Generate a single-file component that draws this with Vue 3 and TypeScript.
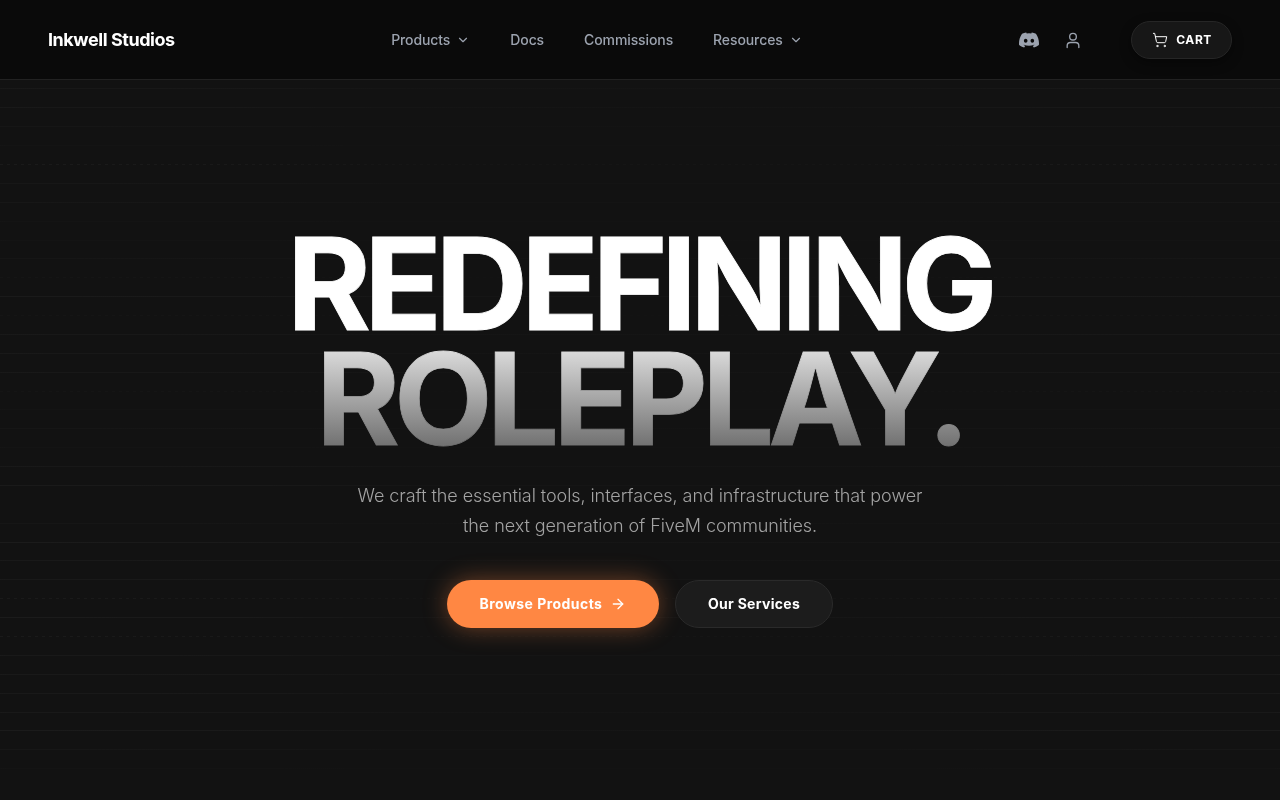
<script setup lang="ts">
const links = [
  { label: 'Products', caret: true },
  { label: 'Docs', caret: false },
  { label: 'Commissions', caret: false },
  { label: 'Resources', caret: true },
]

// Faint scan lines behind the hero: [row index, opacity, dotted]
const rows: [number, number, boolean][] = [
  [-4, 0.03, false], [-3, 0.03, false], [-2, 0.018, false], [-1, 0.01, false],
  [0, 0.04, true], [1, 0.025, false], [2, 0.025, false], [3, 0.012, false],
  [4, 0.01, false], [5, 0.018, false], [6, 0.016, true], [7, 0.04, false],
  [8, 0.016, true], [9, 0.03, false], [10, 0.03, false], [11, 0.03, false],
  [12, 0.016, true], [13, 0.012, false], [14, 0.018, false], [15, 0.01, false],
  [16, 0.03, false], [17, 0.04, false], [19, 0.018, false], [20, 0.045, false],
  [21, 0.035, false], [22, 0.035, false], [23, 0.04, true], [24, 0.045, false],
  [25, 0.04, true], [26, 0.035, false], [27, 0.035, false], [28, 0.035, false],
  [29, 0.035, false], [30, 0.045, false], [31, 0.025, false], [32, 0.012, false],
]
const scanLines = rows.map(([n, alpha, dotted]) => ({
  y: Math.round(164 + n * 18.88) + 0.5,
  alpha,
  dash: dotted ? '3 4' : undefined,
}))
</script>

<template>
  <div class="page">
    <svg class="scan" width="1280" height="800" viewBox="0 0 1280 800" aria-hidden="true">
      <defs>
        <linearGradient id="scanFade" x1="0" y1="0" x2="1280" y2="0" gradientUnits="userSpaceOnUse">
          <stop offset="0" stop-color="#fff" stop-opacity="0.9" />
          <stop offset="0.2" stop-color="#fff" stop-opacity="0.75" />
          <stop offset="0.33" stop-color="#fff" stop-opacity="0.35" />
          <stop offset="0.67" stop-color="#fff" stop-opacity="0.35" />
          <stop offset="0.8" stop-color="#fff" stop-opacity="0.75" />
          <stop offset="1" stop-color="#fff" stop-opacity="0.9" />
        </linearGradient>
      </defs>
      <line
        v-for="l in scanLines"
        :key="l.y"
        x1="0"
        x2="1280"
        :y1="l.y"
        :y2="l.y"
        stroke="url(#scanFade)"
        stroke-width="1"
        :stroke-opacity="l.alpha"
        :stroke-dasharray="l.dash"
      />
    </svg>

    <header class="nav">
      <a class="brand">Inkwell Studios</a>
      <nav class="links">
        <a v-for="l in links" :key="l.label" class="link">
          {{ l.label }}
          <svg v-if="l.caret" class="caret" viewBox="0 0 24 24" fill="none" stroke="currentColor" stroke-width="2" stroke-linecap="round" stroke-linejoin="round"><path d="m6 9 6 6 6-6" /></svg>
        </a>
      </nav>
      <div class="actions">
        <svg class="discord" viewBox="0 0 24 24" fill="currentColor"><path d="M20.317 4.37a19.791 19.791 0 0 0-4.885-1.515.074.074 0 0 0-.079.037c-.21.375-.444.864-.608 1.25a18.27 18.27 0 0 0-5.487 0 12.64 12.64 0 0 0-.617-1.25.077.077 0 0 0-.079-.037A19.736 19.736 0 0 0 3.677 4.37a.07.07 0 0 0-.032.027C.533 9.046-.32 13.58.099 18.057a.082.082 0 0 0 .031.057 19.9 19.9 0 0 0 5.993 3.03.078.078 0 0 0 .084-.028 14.09 14.09 0 0 0 1.226-1.994.076.076 0 0 0-.041-.106 13.107 13.107 0 0 1-1.872-.892.077.077 0 0 1-.008-.128 10.2 10.2 0 0 0 .372-.292.074.074 0 0 1 .077-.01c3.928 1.793 8.18 1.793 12.062 0a.074.074 0 0 1 .078.01c.12.098.246.198.373.292a.077.077 0 0 1-.006.127 12.299 12.299 0 0 1-1.873.892.077.077 0 0 0-.041.107c.36.698.772 1.362 1.225 1.993a.076.076 0 0 0 .084.028 19.839 19.839 0 0 0 6.002-3.03.077.077 0 0 0 .032-.054c.5-5.177-.838-9.674-3.549-13.66a.061.061 0 0 0-.031-.03zM8.02 15.33c-1.183 0-2.157-1.085-2.157-2.419 0-1.333.956-2.419 2.157-2.419 1.21 0 2.176 1.096 2.157 2.42 0 1.333-.956 2.418-2.157 2.418zm7.975 0c-1.183 0-2.157-1.085-2.157-2.419 0-1.333.955-2.419 2.157-2.419 1.21 0 2.176 1.096 2.157 2.42 0 1.333-.946 2.418-2.157 2.418z" /></svg>
        <svg class="user" viewBox="0 0 24 24" fill="none" stroke="currentColor" stroke-width="1.6" stroke-linecap="round" stroke-linejoin="round"><circle cx="12" cy="8" r="4" /><path d="M19 21v-2a4 4 0 0 0-4-4H9a4 4 0 0 0-4 4v2" /></svg>
        <button class="cart">
          <svg class="cart-icon" viewBox="0 0 24 24" fill="none" stroke="currentColor" stroke-width="1.5" stroke-linecap="round" stroke-linejoin="round"><circle cx="8" cy="21" r="1" /><circle cx="19" cy="21" r="1" /><path d="M2.05 2.05h2l2.66 12.42a2 2 0 0 0 2 1.58h9.78a2 2 0 0 0 1.95-1.57l1.65-7.43H5.12" /></svg>
          CART
        </button>
      </div>
    </header>

    <main class="hero">
      <h1 class="title">
        <span class="line-one">REDEFINING</span>
        <span class="line-two">ROLEPLAY.</span>
      </h1>
      <p class="lead">We craft the essential tools, interfaces, and infrastructure that power the next generation of FiveM communities.</p>
      <div class="cta">
        <a class="btn primary">
          Browse Products
          <svg class="arrow" viewBox="0 0 24 24" fill="none" stroke="currentColor" stroke-width="2" stroke-linecap="round" stroke-linejoin="round"><path d="M5 12h14" /><path d="m12 5 7 7-7 7" /></svg>
        </a>
        <a class="btn secondary">Our Services</a>
      </div>
    </main>
  </div>
</template>

<style>
html, body { margin: 0; background: #121212; }
</style>

<style scoped>
.page {
  position: relative;
  width: 1280px;
  height: 800px;
  overflow: hidden;
  display: flex;
  flex-direction: column;
  font-family: Inter, "Liberation Sans", sans-serif;
  background-color: #121212;
}
.scan {
  position: absolute;
  inset: 0;
  pointer-events: none;
}
.nav {
  position: relative;
  height: 79px;
  flex: none;
  display: flex;
  justify-content: space-between;
  align-items: center;
  padding: 0 48px;
  background: rgba(10, 10, 10, 0.98);
  border-bottom: 1px solid #222222;
  will-change: transform;
}
.brand {
  font-size: 18px;
  font-weight: 700;
  letter-spacing: -0.45px;
  color: #ffffff;
}
.links {
  display: flex;
  align-items: center;
  gap: 40px;
}
.link {
  display: flex;
  align-items: center;
  gap: 6px;
  font-size: 14px;
  font-weight: 500;
  letter-spacing: -0.1px;
  color: #9ca3af;
}
.caret { width: 14px; height: 14px; }
.actions {
  display: flex;
  align-items: center;
  color: #9ca3af;
}
.discord { width: 20px; height: 20px; margin-right: 24px; }
.user { width: 20px; height: 20px; margin-right: 48px; }
.cart {
  display: flex;
  align-items: center;
  gap: 8px;
  height: 38px;
  padding: 0 19px 0 20px;
  border-radius: 19px;
  border: 1px solid #262626;
  background: #171717;
  color: #ffffff;
  font: 700 12px Inter, "Liberation Sans", sans-serif;
  letter-spacing: 0.6px;
  box-shadow: 0 4px 12px rgba(0,0,0,0.4);
}
.cart-icon { width: 16px; height: 16px; }
.hero {
  position: relative;
  flex: 1;
  display: flex;
  flex-direction: column;
  align-items: center;
  padding-top: 146px;
  will-change: transform;
}
.title {
  margin: 0;
  display: flex;
  flex-direction: column;
  align-items: center;
  font-size: 128px;
  font-weight: 700;
  line-height: 115px;
  color: #ffffff;
}
.line-one {
  padding-right: 2px;
  letter-spacing: -6.6px;
  -webkit-text-stroke: 0.8px #ffffff;
}
.line-two {
  letter-spacing: -5.95px;
  -webkit-text-stroke: 0.8px transparent;
  background: linear-gradient(to bottom, #e5e5e5, #666666);
  -webkit-background-clip: text;
  background-clip: text;
  color: transparent;
}
.lead {
  width: 576px;
  margin: 25px 0 0;
  text-align: center;
  font-size: 18px;
  font-weight: 300;
  letter-spacing: -0.07px;
  line-height: 30px;
  color: #a3a3a3;
}
.cta {
  display: flex;
  gap: 16px;
  margin-top: 39px;
}
.btn {
  height: 48px;
  box-sizing: border-box;
  display: flex;
  align-items: center;
  justify-content: center;
  border-radius: 24px;
  font-size: 14px;
  font-weight: 700;
  color: #ffffff;
  padding-bottom: 1px;
}
.primary {
  width: 212px;
  gap: 8px;
  letter-spacing: 0.45px;
  background: #ff8743;
  box-shadow: 0 0 24px rgba(255,135,67,0.4);
}
.arrow { width: 16px; height: 16px; margin-top: 1px; }
.secondary {
  width: 158px;
  letter-spacing: 0.3px;
  background: #1c1c1c;
  border: 1px solid #2a2a2a;
}
</style>
